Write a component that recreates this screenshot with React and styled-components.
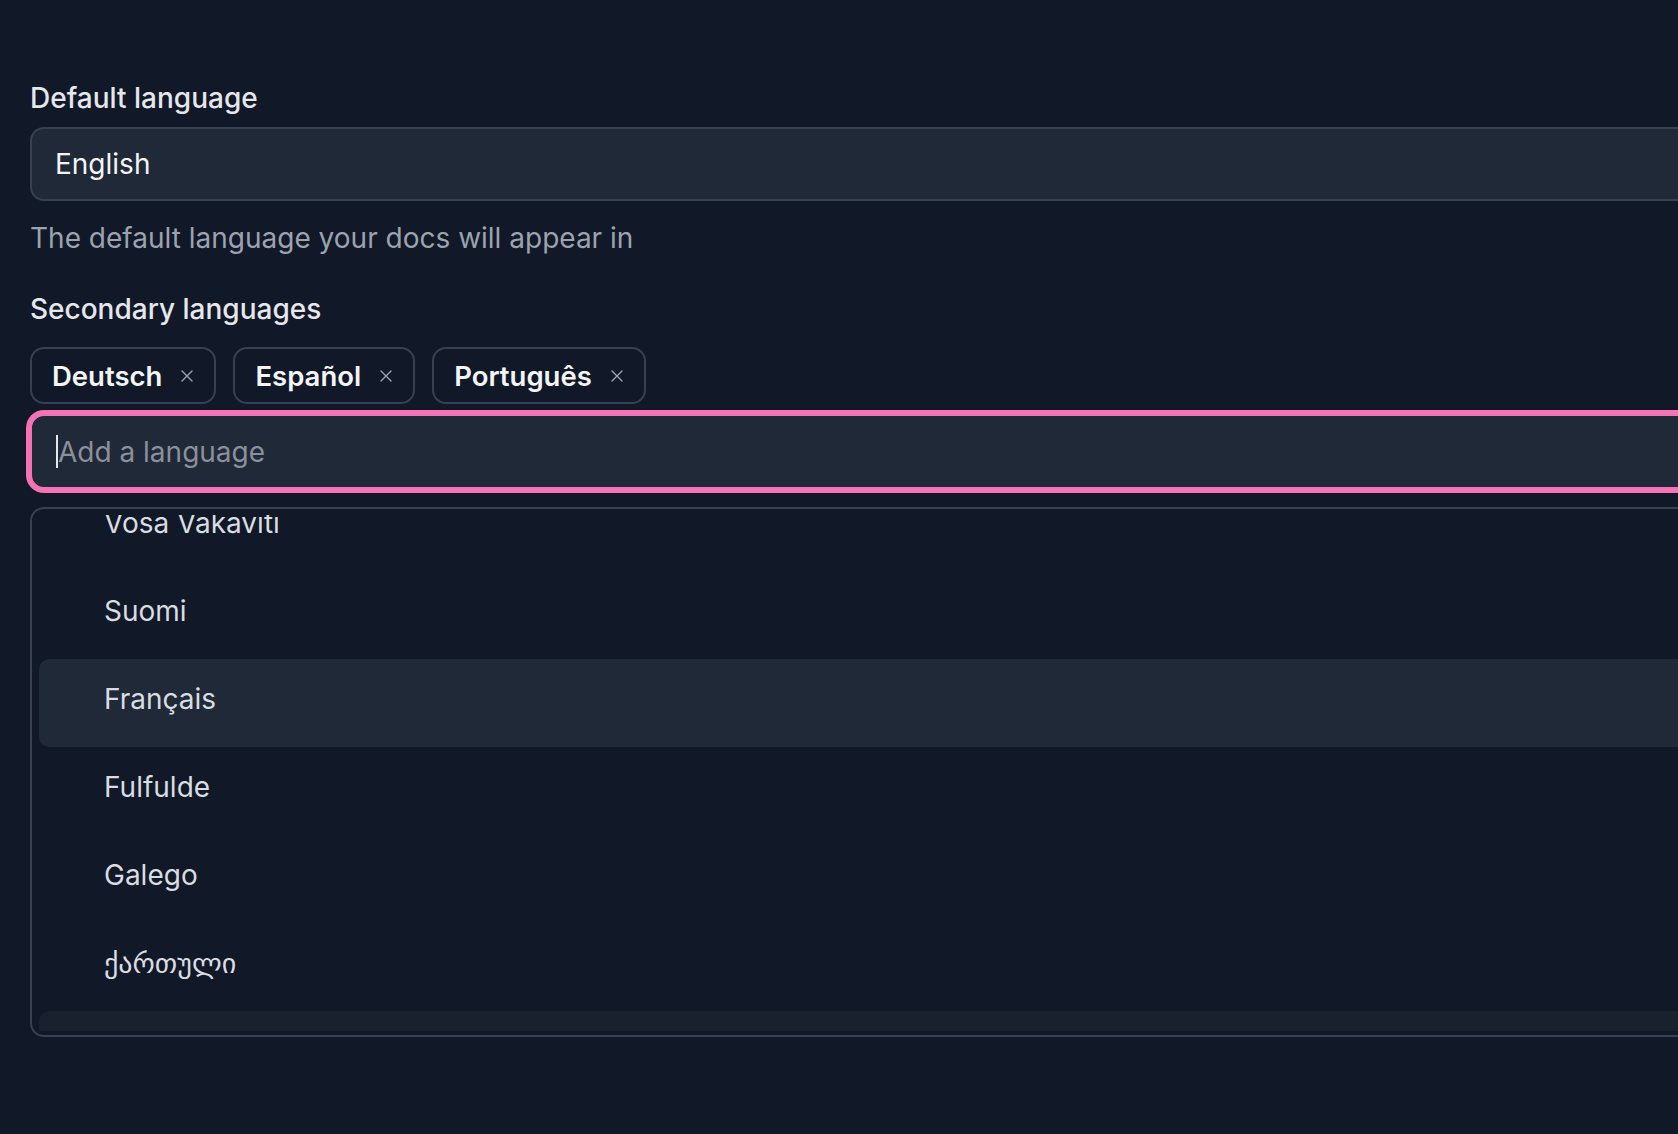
import React, { useLayoutEffect, useRef } from 'react';
import styled, { createGlobalStyle } from 'styled-components';

const GlobalStyle = createGlobalStyle`
  html, body {
    margin: 0;
    padding: 0;
    background: #111827;
    overflow: hidden;
  }
  body {
    font-family: Inter, "Noto Sans", "DejaVu Sans", sans-serif;
    color: #e5e7eb;
  }
  * {
    box-sizing: border-box;
  }
`;

const Page = styled.div`
  min-height: 1134px;
  padding: 80px 0 0 30px;
  background: #111827;
`;

const Form = styled.div`
  width: 1800px;
  display: flex;
  flex-direction: column;
`;

const Label = styled.div`
  font-size: 28px;
  line-height: 36px;
  font-weight: 500;
  color: #e5e7eb;
  margin-bottom: ${(p) => p.$gap || 11}px;
  margin-top: ${(p) => p.$top || 0}px;
`;

const SelectBox = styled.div`
  height: 74px;
  display: flex;
  align-items: center;
  padding: 0 23px;
  background: #1f2937;
  border: 2px solid #374151;
  border-radius: 14px;
  font-size: 28px;
  color: #f3f4f6;
`;

const HelperText = styled.div`
  margin-top: 16px;
  font-size: 28px;
  line-height: 42px;
  color: #9ca3af;
`;

const TagRow = styled.div`
  display: flex;
  flex-wrap: wrap;
  gap: 17px;
  margin-top: 9px;
`;

const Tag = styled.div`
  height: 57px;
  display: flex;
  align-items: center;
  gap: 19px;
  padding: 0 21px 0 20px;
  border: 2px solid #374151;
  border-radius: 14px;
  font-size: 27.5px;
  font-weight: 600;
  color: #f3f4f6;
`;

const RemoveIcon = styled.svg`
  width: 12px;
  height: 12px;
  flex: none;
  stroke: #9ca3af;
  stroke-width: 1.4;
  stroke-linecap: round;
`;

const SearchField = styled.div`
  margin-top: 10px;
  height: 75px;
  display: flex;
  align-items: center;
  padding: 0 23px 0 24px;
  background: #1f2937;
  border: 2px solid #f472b6;
  border-radius: 14px;
  box-shadow: 0 0 0 4px #f472b6;
`;

const Caret = styled.span`
  width: 2px;
  height: 33px;
  flex: none;
  background: #e5e7eb;
`;

const SearchInput = styled.input`
  flex: 1;
  border: none;
  outline: none;
  background: transparent;
  padding: 0;
  font-family: inherit;
  font-size: 28px;
  color: #f3f4f6;
  &::placeholder {
    color: #8b909a;
  }
`;

const ListBox = styled.div`
  margin-top: 18px;
  border: 2px solid #374151;
  border-radius: 14px;
  padding: 6px 8px 4px 7px;
`;

const ListScroll = styled.div`
  height: 516px;
  overflow: hidden;
`;

const Option = styled.div`
  height: 88px;
  display: flex;
  align-items: center;
  gap: 17px;
  padding: 0 0 8px 24px;
  border-radius: 10px;
  font-size: 28px;
  color: #d9dce1;
  background: ${(p) => (p.$active ? '#1f2937' : p.$selected ? '#19212e' : 'transparent')};
`;

const CheckSlot = styled.span`
  width: 24px;
  height: 24px;
  flex: none;
  display: flex;
  align-items: center;
  justify-content: center;
`;

const languages = [
  { name: 'Eesti' },
  { name: 'Eʋegbe' },
  { name: 'Føroyskt' },
  { name: 'Vosa Vakaviti' },
  { name: 'Suomi' },
  { name: 'Français', active: true },
  { name: 'Fulfulde' },
  { name: 'Galego' },
  { name: 'ქართული' },
  { name: 'Deutsch', selected: true },
  { name: 'Ελληνικά' },
];

const tags = ['Deutsch', 'Español', 'Português'];

const XMark = () => (
  <RemoveIcon viewBox="0 0 12 12" fill="none">
    <path d="M1 1 11 11M11 1 1 11" />
  </RemoveIcon>
);

const Check = () => (
  <svg width="22" height="22" viewBox="0 0 24 24" fill="none" stroke="#f472b6" strokeWidth="2.2" strokeLinecap="round" strokeLinejoin="round">
    <path d="M20 6 9 17l-5-5" />
  </svg>
);

export default function App() {
  const scrollRef = useRef(null);

  useLayoutEffect(() => {
    if (scrollRef.current) {
      scrollRef.current.scrollTop = 3 * 88 + 32;
    }
  }, []);

  return (
    <Page>
      <GlobalStyle />
      <Form>
        <Label>Default language</Label>
        <SelectBox>English</SelectBox>
        <HelperText>The default language your docs will appear in</HelperText>

        <Label $top={32} $gap={0}>Secondary languages</Label>
        <TagRow>
          {tags.map((t) => (
            <Tag key={t}>
              {t}
              <XMark />
            </Tag>
          ))}
        </TagRow>

        <SearchField>
          <Caret />
          <SearchInput placeholder="Add a language" />
        </SearchField>

        <ListBox>
          <ListScroll ref={scrollRef}>
            {languages.map((l) => (
              <Option key={l.name} $active={l.active} $selected={l.selected}>
                <CheckSlot>{l.selected ? <Check /> : null}</CheckSlot>
                {l.name}
              </Option>
            ))}
          </ListScroll>
        </ListBox>
      </Form>
    </Page>
  );
}
